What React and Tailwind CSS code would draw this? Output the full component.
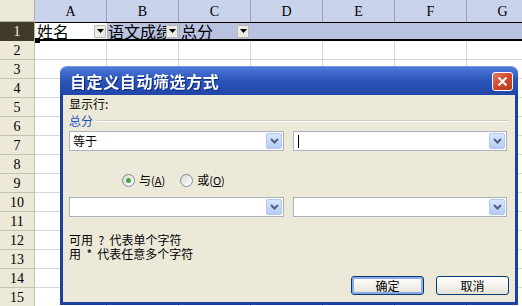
import React from 'react';

const cols = ['A', 'B', 'C', 'D', 'E', 'F', 'G'];
const rows = [2, 3, 4, 5, 6, 7, 8, 9, 10, 11, 12, 13, 14, 15, 16];

const cjk = { fontFamily: '"Noto Sans CJK SC", "Noto Sans", sans-serif' };
const serif = { fontFamily: '"Liberation Serif", "DejaVu Serif", serif' };

function FilterButton() {
  return (
    <div className="w-[12px] h-[13px] shrink-0 bg-[#ecebe4] border border-[#b9b9b0] rounded-[1px] flex items-center justify-center">
      <svg width="7" height="4" viewBox="0 0 7 4">
        <path d="M0 0 L7 0 L3.5 4 Z" fill="#000" />
      </svg>
    </div>
  );
}

function DropButton() {
  return (
    <div className="w-[16px] h-[16px] mr-[1px] shrink-0 rounded-[2px] bg-gradient-to-b from-[#dbe6fd] to-[#b5cbf6] border border-[#b4c7ef] flex items-center justify-center">
      <svg width="9" height="6" viewBox="0 0 9 6">
        <path d="M1 1 L4.5 4.5 L8 1" stroke="#4d6185" strokeWidth="2" fill="none" />
      </svg>
    </div>
  );
}

function Combo({ width, children }) {
  return (
    <div className={`${width} h-[20px] bg-white border border-[#a9b2bd] flex items-center`}>
      <div className="flex-1 pl-[3px] text-[12px] leading-none text-black flex items-center">{children}</div>
      <DropButton />
    </div>
  );
}

function Radio({ checked, label, hot }) {
  return (
    <div className="flex items-center">
      <div className="w-[13px] h-[13px] rounded-full border border-[#7a8a9a] bg-gradient-to-br from-[#dcdcd4] to-white flex items-center justify-center">
        {checked && <div className="w-[5px] h-[5px] rounded-full bg-[#3fa84a]" />}
      </div>
      <span className="ml-[4px] text-[12px] leading-none">
        {label}
        <span className="text-[11px]">
          (<span className="underline">{hot}</span>)
        </span>
      </span>
    </div>
  );
}

function XpButton({ children, primary }) {
  return (
    <div
      className={`w-[73px] h-[19px] rounded-[3px] border border-[#003c74] bg-gradient-to-b from-white to-[#e6e4d8] flex items-center justify-center text-[12px] leading-none ${
        primary ? 'shadow-[inset_0_0_0_2px_#8aabe8]' : ''
      }`}
    >
      {children}
    </div>
  );
}

export default function App() {
  return (
    <div className="relative w-[522px] h-[306px] overflow-hidden bg-white" style={cjk}>
      {/* column headers */}
      <div className="flex h-[22px]">
        <div className="w-[35px] shrink-0 bg-[#ece9d8] border-r border-b border-[#b5b2a0]" />
        {cols.map((c) => (
          <div
            key={c}
            className="w-[72px] shrink-0 bg-[#c9d3eb] border-r border-[#95a3c6] flex items-center justify-center text-[14px] text-black"
            style={serif}
          >
            {c}
          </div>
        ))}
      </div>

      {/* row 1 */}
      <div className="flex h-[19px]">
        <div className="w-[35px] shrink-0 bg-[#403b28] text-[#f3f1e6] border-r border-[#b5b2a0] flex items-center justify-center text-[14px]" style={serif}>
          1
        </div>
        <div className="flex-1 flex border-t border-b-2 border-black bg-[#b9c2de]">
          <div className="w-[72px] shrink-0 bg-white flex items-center pr-[1px]">
            <span className="flex-1 text-[16px] leading-none pl-[2px]">姓名</span>
            <FilterButton />
          </div>
          <div className="w-[72px] shrink-0 flex items-center pr-[1px] border-l border-[#a6b0cf]">
            <span className="flex-1 text-[16px] leading-none whitespace-nowrap overflow-hidden">语文成绩</span>
            <FilterButton />
          </div>
          <div className="w-[72px] shrink-0 flex items-center pr-[2px] border-l border-[#a6b0cf]">
            <span className="flex-1 text-[16px] leading-none pl-[1px]">总分</span>
            <FilterButton />
          </div>
        </div>
      </div>

      {/* rows */}
      {rows.map((r) => (
        <div key={r} className="flex h-[19px]">
          <div
            className="w-[35px] shrink-0 bg-[#ece9d8] border-r border-b border-[#c5c2b0] flex items-center justify-center text-[14px] text-black"
            style={serif}
          >
            {r}
          </div>
          {cols.map((c) => (
            <div key={c} className="w-[72px] shrink-0 border-r border-b border-[#d6d6d6]" />
          ))}
        </div>
      ))}

      {/* fill handle */}
      <div className="absolute left-[35px] top-[38px] w-[5px] h-[5px] bg-black" />

      {/* dialog */}
      <div className="absolute left-[60px] top-[66px] w-[458px] h-[239px] flex flex-col">
        <div className="h-[29px] shrink-0 rounded-t-[7px] bg-gradient-to-b from-[#4d7ad9] via-[#2a53b8] to-[#2047a9] border-t border-[#7898e0] flex items-center justify-between pl-[10px] pr-[5px]">
          <span className="text-white text-[16px] font-bold tracking-[0.6px] leading-none drop-shadow-[1px_1px_0_#0c2a80]">
            自定义自动筛选方式
          </span>
          <div className="w-[21px] h-[19px] rounded-[3px] border border-white bg-gradient-to-br from-[#e67b5f] via-[#d3482a] to-[#b33a1c] flex items-center justify-center mt-[1px]">
            <svg width="11" height="11" viewBox="0 0 11 11">
              <path d="M1.5 1.5 L9.5 9.5 M9.5 1.5 L1.5 9.5" stroke="#fff" strokeWidth="2" />
            </svg>
          </div>
        </div>
        <div className="flex-1 bg-[#ece9d8] border-x-[3px] border-b-[3px] border-[#1e40a0] px-[6px] flex flex-col text-black">
          <div className="mt-[1px] h-[16px] text-[12px] leading-[16px]">显示行:</div>
          <div className="mt-[1px] h-[16px] flex items-center">
            <span className="text-[12px] leading-[16px] text-[#1f4fc4]">总分</span>
            <div className="flex-1 ml-[4px] border-t border-[#d0cdbd] border-b border-b-white" />
          </div>
          <div className="mt-[2px] flex gap-[9px]">
            <Combo width="w-[215px]">等于</Combo>
            <Combo width="w-[214px]">
              <div className="w-[1px] h-[13px] bg-black ml-[1px]" />
            </Combo>
          </div>
          <div className="mt-[21px] h-[16px] flex items-center pl-[53px] gap-[15px]">
            <Radio checked label="与" hot="A" />
            <Radio label="或" hot="O" />
          </div>
          <div className="mt-[9px] flex gap-[9px]">
            <Combo width="w-[215px]" />
            <Combo width="w-[214px]" />
          </div>
          <div className="mt-[16px] text-[12px] leading-[14px] whitespace-pre">可用  ?  代表单个字符</div>
          <div className="text-[12px] leading-[14px] whitespace-pre">用  *  代表任意多个字符</div>
          <div className="mt-[15px] flex justify-end gap-[12px]">
            <XpButton primary>确定</XpButton>
            <XpButton>取消</XpButton>
          </div>
        </div>
      </div>
    </div>
  );
}
